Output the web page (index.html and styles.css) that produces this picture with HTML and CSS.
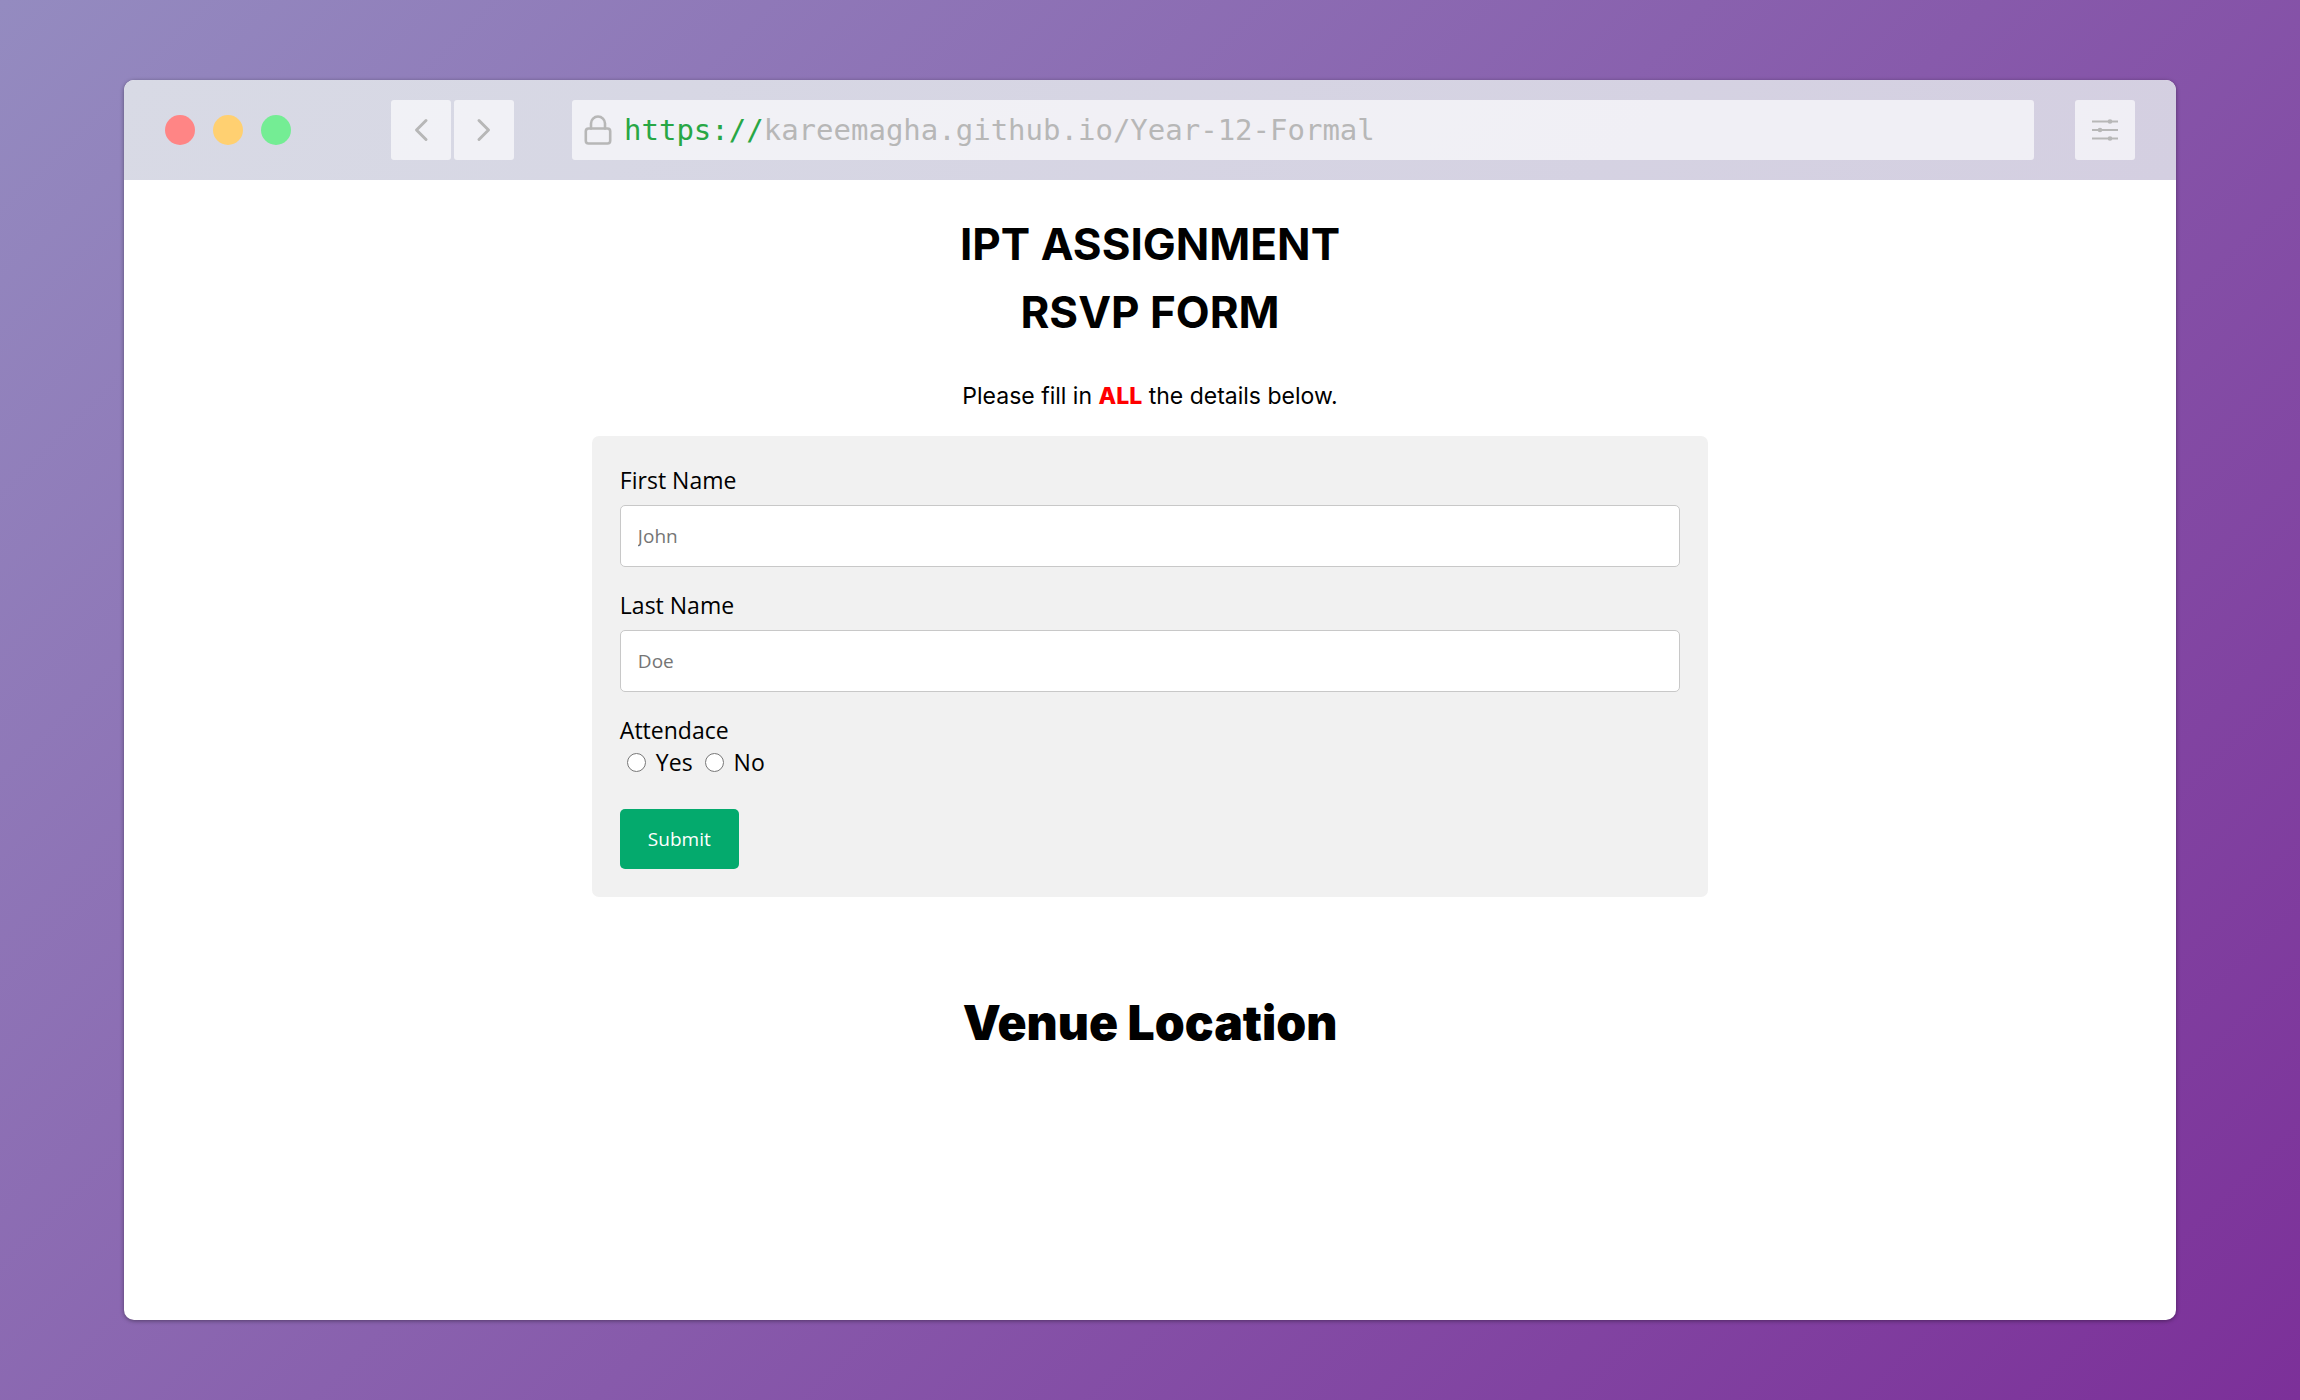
FILE: index.html
```html
<!DOCTYPE html>
<html lang="en">
<head>
<meta charset="utf-8">
<title>IPT Assignment RSVP Form</title>
<link rel="stylesheet" href="styles.css">
</head>
<body>
<div class="window">
  <header class="toolbar">
    <div class="lights">
      <span class="light light-red"></span>
      <span class="light light-yellow"></span>
      <span class="light light-green"></span>
    </div>
    <nav class="history">
      <button class="tool" type="button" aria-label="Back"><svg width="60" height="60" viewBox="0 0 60 60"><path d="M35 20.500 25.500 30 35 39.500"/></svg></button>
      <button class="tool" type="button" aria-label="Forward"><svg width="60" height="60" viewBox="0 0 60 60"><path d="M25 20.500 34.500 30 25 39.500"/></svg></button>
    </nav>
    <div class="address">
      <svg width="28" height="30" viewBox="0 0 28 30" aria-hidden="true"><rect x="1.800" y="13.500" width="24.400" height="15" rx="2.800" stroke-width="2.600"/><path d="M7 13.500V8.500a7 7 0 0 1 14 0v5" stroke-width="2.600"/></svg>
      <span class="url"><span class="scheme">https://</span>kareemagha.github.io/Year-12-Formal</span>
    </div>
    <button class="tool settings" type="button" aria-label="Settings"><svg width="60" height="60" viewBox="0 0 60 60"><path d="M17 21.500H43M17 30H43M17 38.500H43"/><circle cx="35" cy="21.500" r="2.300"/><circle cx="25" cy="30" r="2.300"/><circle cx="35" cy="38.500" r="2.300"/></svg></button>
  </header>
  <main class="page">
    <h1 class="title">IPT ASSIGNMENT<br>RSVP FORM</h1>
    <p class="intro">Please fill in <strong class="all">ALL</strong> the details below.</p>
    <form class="form">
      <div class="field">
        <label class="label" for="first">First Name</label>
        <input class="text" id="first" type="text" placeholder="John">
      </div>
      <div class="field">
        <label class="label" for="last">Last Name</label>
        <input class="text" id="last" type="text" placeholder="Doe">
      </div>
      <fieldset class="attendance">
        <legend class="label">Attendace</legend>
        <div class="options">
          <label class="option"><input class="radio" type="radio" name="attend">Yes</label>
          <label class="option"><input class="radio" type="radio" name="attend">No</label>
        </div>
      </fieldset>
      <button class="submit" type="button">Submit</button>
    </form>
    <h2 class="venue">Venue Location</h2>
  </main>
</div>
</body>
</html>
```
FILE: styles.css
```css
* {
  box-sizing: border-box;
}

body {
  margin: 0;
  min-height: 100vh;
  padding: 80px 124px;
  display: flex;
  background: linear-gradient(135deg, #948bc0, #7c3099);
  font-family: "Open Sans", sans-serif;
  color: #000;
}

.window {
  flex: 1;
  display: flex;
  flex-direction: column;
  border-radius: 10px;
  overflow: hidden;
  background: #fff;
  box-shadow: 0 1px 4px rgba(0, 0, 0, 0.4);
}

.toolbar {
  display: flex;
  align-items: center;
  height: 100px;
  padding: 0 41px;
  background: linear-gradient(135deg, #d8dae5, #d4cfe1);
}

.lights {
  display: flex;
  gap: 18px;
}

.light {
  width: 30px;
  height: 30px;
  border-radius: 50%;
}

.light-red {
  background: #ff8585;
}

.light-yellow {
  background: #ffd071;
}

.light-green {
  background: #74ed94;
}

.history {
  display: flex;
  gap: 3px;
  margin-left: 100px;
}

.tool {
  width: 60px;
  height: 60px;
  padding: 0;
  border: 0;
  border-radius: 3px;
  background: rgba(255, 255, 255, 0.65);
}

.tool svg,
.address svg {
  display: block;
  flex: none;
  fill: none;
  stroke: #b7b7b7;
  stroke-width: 3;
  stroke-linecap: round;
  stroke-linejoin: round;
}

.tool.settings svg {
  stroke-width: 2;
  stroke-linecap: butt;
}

.tool.settings circle {
  fill: #b7b7b7;
  stroke: none;
}

.address {
  flex: 1;
  display: flex;
  align-items: center;
  gap: 12px;
  height: 60px;
  margin: 0 41px 0 58px;
  padding: 0 12px;
  border-radius: 3px;
  background: rgba(255, 255, 255, 0.65);
}

.url {
  font: 29px/40px "DejaVu Sans Mono", monospace;
  color: #b7b7b7;
}

.scheme {
  color: #28a745;
}

.page {
  display: flex;
  flex-direction: column;
  align-items: center;
  padding-top: 30px;
}

.title,
.venue {
  margin: 0;
  font: 700 44px/68px Inter, sans-serif;
  text-align: center;
}

.intro {
  margin: 37px 0 27px;
  font: 23px/26px Inter, sans-serif;
}

.all {
  font-weight: 800;
  color: #f00;
}

.form {
  width: 54.4%;
  padding: 28px;
  border-radius: 7px;
  background: #f1f1f1;
}

.field {
  margin-bottom: 22px;
}

.label {
  display: block;
  padding: 0;
  font-size: 23px;
  line-height: 33px;
}

.text {
  display: block;
  width: 100%;
  height: 62px;
  margin-top: 8px;
  padding: 0 17px;
  border: 1px solid #c8c8c8;
  border-radius: 5px;
  background: #fff;
  font: 19px/26px "Open Sans", sans-serif;
}

.text::placeholder {
  color: #757575;
  opacity: 1;
}

.attendance {
  margin: 0 0 32px;
  padding: 0;
  border: 0;
}

.options {
  display: flex;
  gap: 12px;
  padding-left: 7px;
}

.option {
  display: flex;
  align-items: center;
  gap: 10px;
  font-size: 23px;
  line-height: 30px;
}

.radio {
  width: 19px;
  height: 19px;
  margin: 0;
}

.submit {
  display: block;
  height: 60px;
  padding: 0 28px;
  border: 0;
  border-radius: 5px;
  background: #04aa6d;
  color: #fff;
  font: 19px/26px "Open Sans", sans-serif;
}

.venue {
  margin-top: 92px;
  font-size: 48px;
  font-weight: 900;
}
```
